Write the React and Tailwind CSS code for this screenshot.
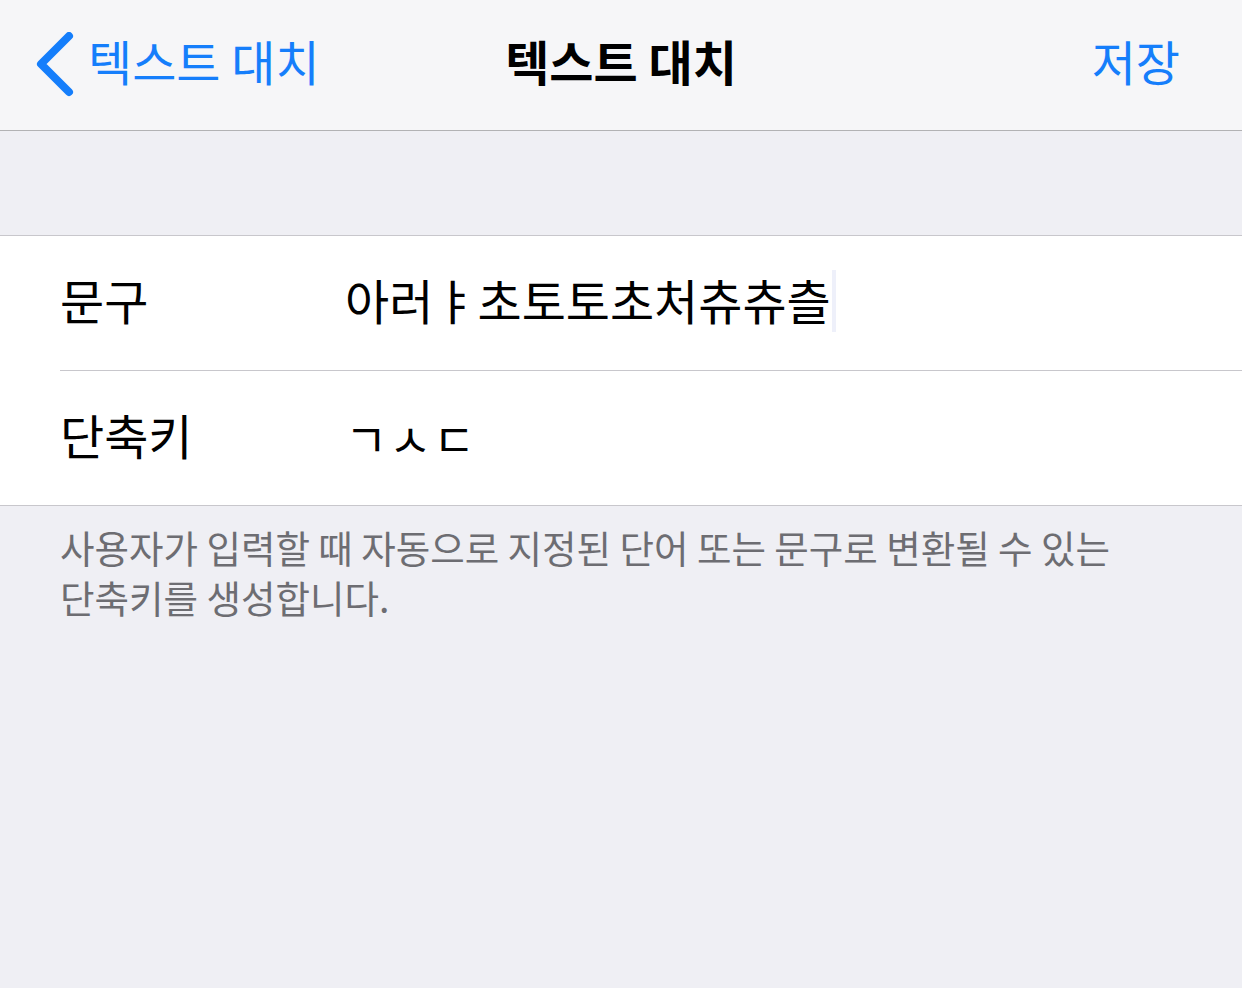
import React from 'react';

const font = { fontFamily: '"Noto Sans CJK KR", "Noto Sans", sans-serif' };

const BackChevron = () => (
  <svg width="40" height="66" viewBox="0 0 40 66" className="shrink-0">
    <path d="M33 4 L5 32 L33 60" fill="none" stroke="#157efb" strokeWidth="8" strokeLinecap="round" strokeLinejoin="round" />
  </svg>
);

export default function App() {
  return (
    <div className="w-[1242px] h-[988px] bg-[#efeff4] overflow-hidden" style={font}>
      {/* Navigation bar */}
      <div className="h-[131px] bg-[#f6f6f8] border-b border-[#b2b2b4] grid grid-cols-[1fr_auto_1fr] items-center">
        <div className="flex items-center pl-[36px] gap-[12px] text-[#157efb] text-[48px] leading-none">
          <BackChevron />
          <span className="pb-[10px]">텍스트 대치</span>
        </div>
        <div className="text-[48px] font-bold leading-none text-black pb-[10px]">텍스트 대치</div>
        <div className="flex justify-end pr-[62px] text-[#157efb] text-[48px] leading-none pb-[10px]">저장</div>
      </div>

      {/* Spacer */}
      <div className="h-[105px] border-b border-[#c8c7cc]" />

      {/* Rows */}
      <div className="bg-white border-b border-[#c8c7cc]">
        <div className="h-[134px] flex items-center pl-[60px]">
          <div className="w-[285px] text-[48px] leading-none text-black pb-[8px]">문구</div>
          <div className="flex items-center text-[48px] leading-none text-black">
            <span className="pb-[8px]">아러ㅑ초토토초처츄츄츨</span>
            <span className="ml-[1px] w-[4px] h-[62px] bg-[#eef0fa] -translate-y-[2px]" />
          </div>
        </div>
        <div className="ml-[60px] h-px bg-[#c8c7cc]" />
        <div className="h-[134px] flex items-center pl-[60px]">
          <div className="w-[285px] text-[48px] leading-none text-black pb-[8px]">단축키</div>
          <div className="flex items-end h-[48px] text-[46px] leading-none text-black">
            <span className="w-[44px] -translate-y-[2px]">ㄱ</span>
            <span className="w-[44px] -translate-y-[2px]">ㅅ</span>
            <span className="w-[44px] -translate-y-[2px]">ㄷ</span>
          </div>
        </div>
      </div>

      {/* Footer */}
      <div className="px-[60px] pt-[16px] text-[37.5px] leading-[50px] text-[#6d6d72]">
        사용자가 입력할 때 자동으로 지정된 단어 또는 문구로 변환될 수 있는
        <br />
        단축키를 생성합니다.
      </div>
    </div>
  );
}
